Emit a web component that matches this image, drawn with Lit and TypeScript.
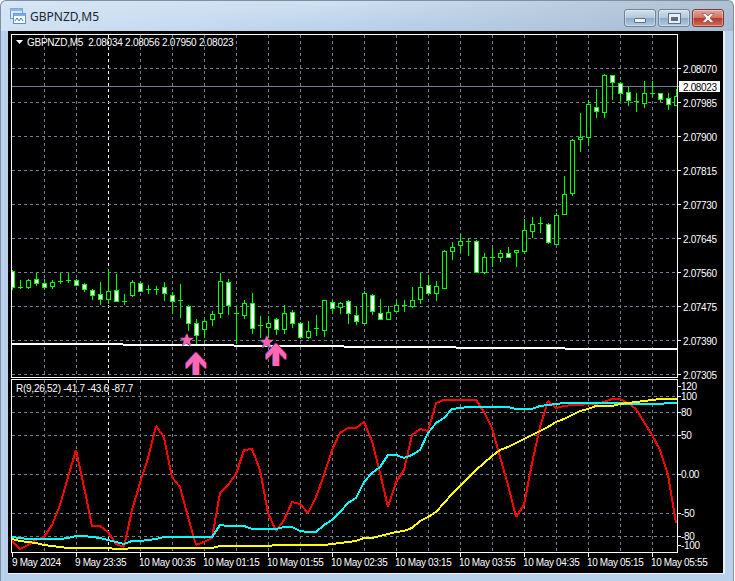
import { LitElement, html, svg, css } from "lit";
import { customElement } from "lit/decorators.js";

// [high, low, bodyTop, bodyBottom, kind] one candle every 8px from x=12
// kind: w = filled white, h = hollow, d = doji
type Candle = [number, number, number, number, string];
const CANDLES: Candle[] = [
  [270, 289, 271, 287, "w"], [280, 288, 287, 288, "d"], [279, 288, 280, 287, "h"], [273, 285, 279, 283, "w"],
  [279, 288, 283, 287, "w"], [280, 288, 282, 286, "h"], [273, 283, 281, 282, "d"], [273, 282, 280, 281, "d"],
  [279, 285, 280, 285, "w"], [283, 291, 284, 289, "w"], [289, 299, 290, 295, "w"], [282, 304, 294, 299, "w"],
  [269, 303, 291, 299, "h"], [274, 301, 290, 301, "w"], [294, 304, 301, 302, "d"], [280, 296, 282, 295, "h"],
  [282, 291, 283, 291, "w"], [285, 293, 289, 290, "d"], [286, 294, 289, 290, "d"], [282, 300, 287, 293, "w"],
  [292, 313, 295, 301, "w"], [284, 317, 300, 301, "d"], [305, 330, 306, 323, "w"], [319, 343, 323, 335, "w"],
  [319, 337, 321, 329, "h"], [311, 325, 314, 319, "h"], [273, 317, 281, 313, "h"], [279, 314, 282, 305, "w"],
  [307, 343, 313, 314, "d"], [300, 318, 303, 315, "h"], [293, 333, 303, 328, "w"], [316, 337, 325, 326, "d"],
  [316, 337, 323, 327, "h"], [318, 334, 319, 329, "w"], [305, 333, 313, 329, "h"], [310, 327, 312, 323, "w"],
  [322, 338, 323, 337, "w"], [321, 338, 331, 337, "h"], [315, 335, 328, 329, "d"], [300, 336, 300, 330, "h"],
  [300, 313, 302, 308, "w"], [302, 313, 303, 307, "h"], [300, 323, 301, 313, "w"], [307, 324, 315, 321, "w"],
  [291, 323, 293, 323, "h"], [294, 314, 295, 311, "w"], [299, 319, 313, 319, "w"], [306, 319, 312, 319, "h"],
  [299, 311, 305, 311, "h"], [300, 311, 305, 306, "d"], [287, 307, 300, 306, "h"], [273, 303, 287, 299, "h"],
  [275, 294, 285, 293, "w"], [281, 300, 286, 293, "h"], [250, 288, 251, 288, "h"], [242, 259, 247, 251, "h"],
  [234, 252, 241, 245, "h"], [238, 255, 241, 242, "d"], [240, 272, 241, 272, "w"], [253, 273, 257, 272, "h"],
  [248, 266, 257, 258, "d"], [250, 261, 253, 257, "h"], [247, 257, 253, 257, "w"], [250, 266, 250, 252, "h"],
  [219, 253, 230, 251, "h"], [217, 237, 224, 231, "h"], [217, 232, 223, 224, "d"], [223, 243, 224, 242, "w"],
  [213, 244, 215, 244, "h"], [176, 214, 194, 214, "h"], [139, 195, 140, 193, "h"], [113, 151, 137, 139, "h"],
  [100, 145, 104, 137, "h"], [89, 117, 107, 111, "w"], [74, 117, 75, 112, "h"], [75, 99, 75, 82, "w"],
  [82, 101, 83, 93, "w"], [87, 105, 92, 100, "w"], [93, 111, 101, 102, "d"], [81, 107, 93, 103, "h"],
  [81, 96, 93, 94, "d"], [93, 101, 93, 99, "w"], [93, 109, 98, 104, "w"], [89, 105, 96, 105, "h"],
];

const RED: number[] = [
  541, 549, 545, 540, 537, 525, 505, 477, 450, 487, 526, 526, 532, 544, 547, 510, 483, 458, 426, 437, 477,
  487, 517, 545, 542, 538, 493, 485, 474, 450, 449, 470, 513, 531, 520, 502, 504, 513, 497, 475, 450, 433,
  428, 428, 422, 441, 473, 507, 482, 470, 435, 429, 431, 403, 400, 400, 400, 400, 400, 412, 428, 457, 485,
  517, 505, 463, 427, 401, 408, 406, 405, 405, 404, 404, 402, 399, 399, 403, 409, 422, 435, 450, 475, 523,
  506,
];
const CYAN: number[] = [
  537, 538, 539, 539, 539, 539, 539, 538, 536, 536, 537, 538, 540, 542, 544, 541, 541, 540, 539, 537, 537,
  537, 537, 537, 537, 537, 525, 526, 526, 526, 529, 529, 529, 529, 527, 527, 531, 532, 532, 525, 520, 512,
  503, 498, 482, 473, 467, 455, 455, 458, 455, 450, 433, 423, 418, 409, 408, 407, 407, 407, 407, 407, 407,
  409, 409, 409, 406, 405, 404, 403, 403, 403, 403, 403, 403, 403, 403, 404, 404, 404, 404, 404, 403, 403,
  403,
];
const YELLOW: number[] = [
  539, 541, 542, 543, 545, 546, 547, 548, 548, 548, 548, 548, 548, 549, 549, 548, 548, 548, 548, 548, 548,
  548, 548, 548, 548, 548, 546, 546, 546, 546, 546, 546, 546, 545, 545, 545, 545, 545, 545, 545, 544, 543,
  542, 541, 538, 538, 536, 534, 532, 531, 528, 521, 517, 512, 503, 494, 486, 478, 470, 463, 456, 450, 447,
  443, 439, 435, 431, 427, 422, 419, 415, 411, 409, 406, 406, 406, 404, 403, 402, 401, 400, 399, 399, 399,
  399,
];

const PRICES = ["2.08070", "2.07985", "2.07900", "2.07815", "2.07730", "2.07645", "2.07560", "2.07475", "2.07390", "2.07305"];
const LEVELS: [string, number, boolean][] = [
  ["120", 386, false], ["100", 396, true], ["80", 412, true], ["50", 435, true],
  ["0.00", 474, true], ["-50", 513, true], ["-80", 536, true], ["-100", 545, false],
];
const TIMES = ["9 May 2024", "9 May 23:35", "10 May 00:35", "10 May 01:15", "10 May 01:55", "10 May 02:35", "10 May 03:15", "10 May 03:55", "10 May 04:35", "10 May 05:15", "10 May 05:55"];
const BASELINE: [number, number, number][] = [[12, 123, 343], [123, 234, 344], [234, 344, 345], [344, 456, 346], [456, 565, 347], [565, 677, 348]];

const toPoints = (ys: number[]) => ys.map((y, i) => `${12 + i * 8},${y}`).join(" ");

const STAR = "0,-7 1.8,-2.2 7,-2.2 2.9,0.9 4.4,6 0,3 -4.4,6 -2.9,0.9 -7,-2.2 -1.8,-2.2";
const ARROW = "0,0 -10,11 -10,17 -3,10 -3,23 3,23 3,10 10,17 10,11";

@customElement("app-root")
export class AppRoot extends LitElement {
  static styles = css`
    :host {
      display: block;
      width: 735px;
      height: 581px;
      background: #fff;
      overflow: hidden;
    }
    .window {
      box-sizing: border-box;
      width: 734px;
      height: 581px;
      display: flex;
      flex-direction: column;
      padding: 0 8px 7px 7px;
      border: 1px solid #7f90a3;
      border-bottom: none;
      border-radius: 6px 6px 0 0;
      background:
        linear-gradient(90deg, rgba(218, 232, 246, 0.7), rgba(185, 209, 234, 0) 45%, rgba(150, 168, 188, 0.55)) 0 0 / 100% 30px no-repeat,
        linear-gradient(180deg, #cfe0f1 0, #b9d1ea 31px);
    }
    .titlebar {
      flex: none;
      height: 30px;
      display: flex;
      align-items: center;
      gap: 4px;
      padding-left: 2px;
    }
    .app-icon {
      width: 16px;
      height: 16px;
      flex: none;
    }
    .title {
      flex: 1;
      font: 12px "Noto Sans", "Liberation Sans", sans-serif;
      color: #1c2733;
      padding-top: 7px;
      margin-top: -7px;
    }
    .buttons {
      display: flex;
      gap: 2px;
      align-self: flex-start;
      margin-top: 8px;
      margin-right: 1px;
    }
    .btn {
      box-sizing: border-box;
      width: 32px;
      height: 18px;
      border: 1px solid #6f8398;
      border-radius: 3px;
      display: flex;
      align-items: center;
      justify-content: center;
      background: linear-gradient(180deg, #d3e0ec 0, #b3c8dc 48%, #8fabc6 52%, #b4cbe0 100%);
      box-shadow: inset 0 0 0 1px rgba(255, 255, 255, 0.35);
    }
    .btn.close {
      border-color: #7d3a34;
      background: linear-gradient(180deg, #e2a69c 0, #cf7264 48%, #b83a2c 52%, #cf6a56 100%);
    }
    .minimize {
      width: 10px;
      height: 3px;
      margin-top: 4px;
      background: #eef2f6;
      border: 1px solid #5d7186;
      border-radius: 1px;
    }
    .maximize {
      box-sizing: border-box;
      width: 11px;
      height: 9px;
      background: #596c80;
      border: 2px solid #e9eff5;
      outline: 1px solid #5d7186;
      border-top-width: 3px;
    }
    .close-icon {
      width: 14px;
      height: 10px;
    }
    .chart {
      flex: 1;
      min-height: 0;
      background: #000;
      border-right: 2px solid #e8eef5;
      border-bottom: 1px solid #f2f6fa;
    }
    .chart svg {
      display: block;
    }
    text {
      font: 10px "Liberation Sans", Arial, sans-serif;
      letter-spacing: -0.35px;
      fill: #fff;
      dominant-baseline: central;
    }
    text.current {
      fill: #000;
    }
    text.legend {
      letter-spacing: -0.25px;
    }
    .grid {
      stroke: #708090;
      stroke-width: 1;
      stroke-dasharray: 3 3;
      fill: none;
    }
    .sep {
      stroke: #fff;
      stroke-width: 1;
      stroke-dasharray: 3 3;
    }
    .frame {
      fill: none;
      stroke: #fff;
      stroke-width: 1;
    }
    .tick {
      stroke: #fff;
      stroke-width: 1;
    }
    .wick {
      fill: #00ff00;
    }
    .body-w {
      fill: #fff;
    }
    .body-h {
      fill: #000;
    }
    .series {
      fill: none;
      stroke-width: 2;
      stroke-linejoin: bevel;
    }
    .star {
      fill: #f864a8;
    }
    .arrow {
      fill: #ff69b4;
    }
  `;

  private candle(c: Candle, i: number) {
    const x = 12 + i * 8;
    const [hi, lo, top, bot, kind] = c;
    const wick = svg`<rect class="wick" x=${x} y=${hi} width="1" height=${lo - hi + 1}></rect>`;
    if (kind === "d") {
      return svg`${wick}<rect class="wick" x=${x - 2} y=${top} width="5" height=${bot - top}></rect>`;
    }
    return svg`${wick}
      <rect class="wick" x=${x - 2} y=${top} width="5" height=${bot - top + 1}></rect>
      <rect class=${kind === "w" ? "body-w" : "body-h"} x=${x - 1} y=${top + 1} width="3" height=${Math.max(bot - top - 1, 0)}></rect>`;
  }

  private chart() {
    const vGrid: number[] = [];
    for (let x = 44; x < 677; x += 32) vGrid.push(x);
    return svg`
      <defs>
        <clipPath id="main"><rect x="12" y="35" width="665" height="342"></rect></clipPath>
        <clipPath id="sub"><rect x="12" y="380" width="665" height="172"></rect></clipPath>
      </defs>
      <g shape-rendering="crispEdges">
        ${vGrid.map((x) => svg`
          <line class=${x === 108 ? "sep" : "grid"} x1=${x + 0.5} y1="35" x2=${x + 0.5} y2="377"></line>
          <line class=${x === 108 ? "sep" : "grid"} x1=${x + 0.5} y1="380" x2=${x + 0.5} y2="552"></line>`)}
        ${PRICES.map((_, i) => svg`<line class="grid" x1="12" y1=${68.5 + i * 34} x2="677" y2=${68.5 + i * 34}></line>`)}
        ${LEVELS.filter((l) => l[2]).map((l) => svg`<line class="grid" x1="12" y1=${l[1] + 0.5} x2="677" y2=${l[1] + 0.5}></line>`)}
        <line x1="12" y1="86.5" x2="679" y2="86.5" stroke="#708090"></line>
        <g clip-path="url(#main)">
          ${CANDLES.map((c, i) => this.candle(c, i))}
          ${BASELINE.map(([a, b, y]) => svg`<rect x=${a} y=${y} width=${b - a} height="2" fill="#fff"></rect>`)}
        </g>
        <rect class="frame" x="11.5" y="34.5" width="666" height="343"></rect>
        <rect class="frame" x="11.5" y="379.5" width="666" height="173"></rect>
        ${PRICES.map((_, i) => svg`<line class="tick" x1="678" y1=${68.5 + i * 34} x2="681" y2=${68.5 + i * 34}></line>`)}
        ${LEVELS.map((l) => svg`<line class="tick" x1="678" y1=${l[1] + 0.5} x2="681" y2=${l[1] + 0.5}></line>`)}
        ${TIMES.map((_, i) => svg`<line class="tick" x1=${12.5 + i * 64} y1="553" x2=${12.5 + i * 64} y2="557"></line>`)}
      </g>

      <g clip-path="url(#sub)" shape-rendering="crispEdges">
        <polyline class="series" stroke="#ff0000" points=${toPoints(RED)}></polyline>
        <polyline class="series" stroke="#00ffff" points=${toPoints(CYAN)}></polyline>
        <polyline class="series" stroke="#ffff00" points=${toPoints(YELLOW)}></polyline>
      </g>

      ${[[187, 340], [267, 342]].map(([x, y]) => svg`
        <polygon points=${STAR} fill="#3f4fb0" transform="translate(${x - 1} ${y + 0.5})"></polygon>
        <polygon class="star" points=${STAR} transform="translate(${x} ${y})"></polygon>`)}
      ${[[196, 352], [276, 343]].map(([x, y]) => svg`
        <polygon points=${ARROW} fill="#3e50c8" transform="translate(${x - 1} ${y})"></polygon>
        <polygon points=${ARROW} fill="#b01030" transform="translate(${x + 1} ${y})"></polygon>
        <polygon class="arrow" points=${ARROW} transform="translate(${x} ${y})"></polygon>`)}

      <polygon points="16,40 23,40 19.5,44" fill="#fff"></polygon>
      <text class="legend" x="27" y="42.5" xml:space="preserve">GBPNZD,M5  2.08034 2.08056 2.07950 2.08023</text>
      <text class="legend" x="16" y="388.5">R(9,26,52) -41.7 -43.6 -87.7</text>

      ${PRICES.map((p, i) => svg`<text x="683" y=${69 + i * 34}>${p}</text>`)}
      <rect x="679" y="81" width="41" height="11" fill="#fff"></rect>
      <text class="current" x="683" y="87">2.08023</text>
      ${LEVELS.map((l) => svg`<text x="681" y=${l[1] + 0.5}>${l[0]}</text>`)}
      ${TIMES.map((t, i) => svg`<text x=${i === 0 ? 12 : 11 + i * 64} y="562">${t}</text>`)}
    `;
  }

  render() {
    return html`
      <div class="window">
        <div class="titlebar">
          <svg class="app-icon" viewBox="0 0 16 16">
            <rect x="0.5" y="0.5" width="12" height="10" fill="#dfeafa" stroke="#6d9bd8"></rect>
            <rect x="0.5" y="0.5" width="12" height="2.5" fill="#8db6ea"></rect>
            <rect x="3.5" y="5.5" width="12" height="10" fill="#fff" stroke="#5a8ed6"></rect>
            <rect x="3.5" y="5.5" width="12" height="2.5" fill="#7fabe6"></rect>
            <polyline points="5,13 7,10 9,13 11,10 13,13" fill="none" stroke="#3c78cc"></polyline>
          </svg>
          <span class="title">GBPNZD,M5</span>
          <div class="buttons">
            <div class="btn"><div class="minimize"></div></div>
            <div class="btn"><div class="maximize"></div></div>
            <div class="btn close">
              <svg class="close-icon" viewBox="0 0 14 10">
                <path d="M1 0.5h3.5L7 3l2.5-2.5H13L9 5l4 4.5H9.5L7 7 4.5 9.5H1L5 5z" fill="#f4f4f4" stroke="#7d3a34" stroke-width="0.6"></path>
              </svg>
            </div>
          </div>
        </div>
        <div class="chart">
          <svg width="716" height="542" viewBox="8 31 716 542">${this.chart()}</svg>
        </div>
      </div>
    `;
  }
}
